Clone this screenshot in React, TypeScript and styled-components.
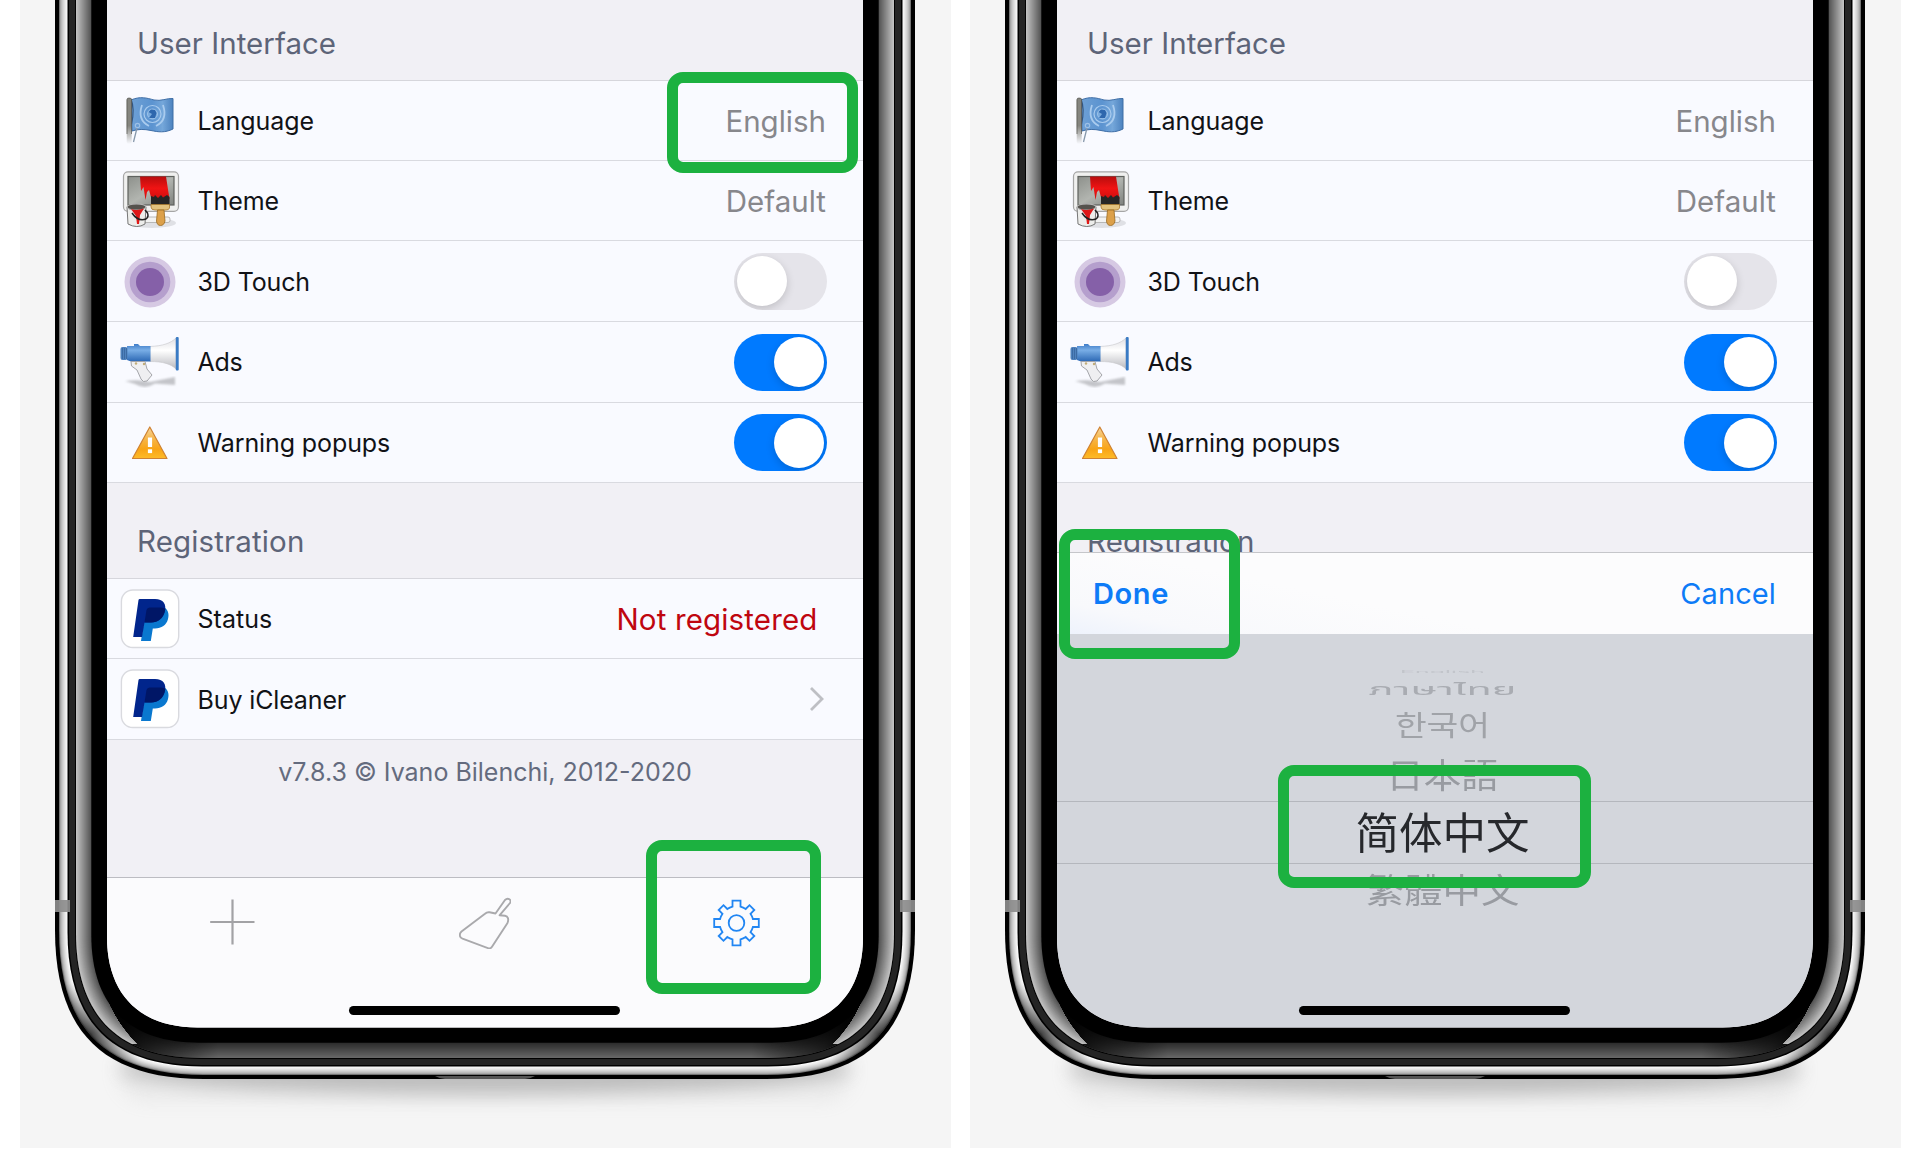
import React from 'react';
import styled, { createGlobalStyle } from 'styled-components';

const GlobalStyle = createGlobalStyle`
  *, *::before, *::after { box-sizing: border-box; }
  html, body { margin: 0; background: #fff; overflow: hidden; }
  body { font-family: Inter, Roboto, "Noto Sans CJK SC", sans-serif; }
`;

const Page = styled.main`
  display: flex;
  gap: 18.5px;
  width: 1920px;
  height: 1168px;
  padding-left: 19.5px;
  background: #fff;
`;

const Panel = styled.section`
  width: 931.5px;
  height: 1148px;
  padding-left: 35.5px;
  background: #f5f5f5;
`;

const Phone = styled.div`
  position: relative;
  width: 860px;
  height: 1148px;
  padding: 0 52px;
`;

const BezelArt = styled.svg`
  position: absolute;
  left: 0;
  top: 0;
  width: 860px;
  height: 1148px;
`;

const Screen = styled.div`
  position: relative;
  display: flex;
  flex-direction: column;
  width: 756px;
  height: 1027.5px;
  background: #f1f0f5;
  clip-path: path('M0 0 H756 V937 C756 994.5 723 1027.5 665.5 1027.5 H90.5 C33 1027.5 0 994.5 0 937 Z');
`;

const SectionTitle = styled.h2<{ $height: number; $spacing: number }>`
  display: flex;
  align-items: flex-end;
  flex: none;
  height: ${(p) => p.$height}px;
  margin: 0;
  padding: 0 0 19px 30px;
  border-bottom: 1.5px solid #d6d6dc;
  font-size: 29.5px;
  line-height: 36px;
  font-weight: 400;
  letter-spacing: ${(p) => p.$spacing}px;
  color: #5d6478;
`;

const Row = styled.div<{ $height: number }>`
  display: flex;
  align-items: center;
  flex: none;
  height: ${(p) => p.$height}px;
  padding: 0 36px 0 14px;
  background: #f9faff;
  border-bottom: 1.5px solid #d9dae0;
`;

const IconSlot = styled.svg`
  flex: none;
  width: 58px;
  height: 58px;
  overflow: visible;
`;

const Label = styled.span<{ $spacing: number }>`
  flex: 1;
  margin-left: 18.5px;
  padding-top: 1.5px;
  font-size: 25px;
  line-height: 32px;
  letter-spacing: ${(p) => p.$spacing}px;
  white-space: nowrap;
  color: #111216;
`;

const Value = styled.span<{ $color?: string; $inset?: number; $spacing: number }>`
  margin-right: ${(p) => p.$inset ?? 1}px;
  padding-top: 1px;
  font-size: 29.5px;
  line-height: 36px;
  letter-spacing: ${(p) => p.$spacing}px;
  white-space: nowrap;
  color: ${(p) => p.$color ?? '#87878c'};
`;

const Switch = styled.span<{ $on: boolean }>`
  display: flex;
  align-items: center;
  justify-content: ${(p) => (p.$on ? 'flex-end' : 'flex-start')};
  width: 93.5px;
  height: 57px;
  margin-top: 1px;
  padding: 0 3.5px;
  border-radius: 29px;
  background: ${(p) => (p.$on ? '#007aff' : '#e5e4ea')};
  overflow: hidden;

  &::after {
    content: '';
    width: 50px;
    height: 50px;
    border-radius: 50%;
    background: #fff;
    box-shadow: 0 3px 8px rgba(0, 0, 0, 0.16);
  }
`;

const Chevron = styled.svg`
  width: 16px;
  height: 26px;
  margin-right: 2px;
`;

const Version = styled.p`
  flex: 1;
  margin: 0;
  padding-top: 16px;
  text-align: center;
  font-size: 25px;
  line-height: 32px;
  color: #646b7e;
`;

const TabBar = styled.nav`
  display: grid;
  grid-template-columns: repeat(3, 1fr);
  justify-items: center;
  flex: none;
  height: 150.5px;
  padding-top: 18.5px;
  border-top: 1.5px solid #bcbcc2;
  background: #fbfbfd;
`;

const TabIcon = styled.svg`
  width: 52px;
  height: 52px;
  fill: none;
`;

const HomeIndicator = styled.div`
  position: absolute;
  left: 242px;
  bottom: 12.5px;
  width: 270.5px;
  height: 9px;
  border-radius: 5px;
  background: #000;
`;

const Sheet = styled.div`
  position: absolute;
  left: 0;
  right: 0;
  bottom: 0;
  display: flex;
  flex-direction: column;
  height: 475.5px;
`;

const SheetBar = styled.div`
  display: flex;
  align-items: center;
  justify-content: space-between;
  height: 82px;
  padding: 0 37px 0 36px;
  border-top: 1.5px solid #c5c6ca;
  background: linear-gradient(12deg, #edf2fc 0, #f8f9fc 14%, #fcfcfd 40%);
`;

const SheetButton = styled.button<{ $bold?: boolean; $spacing: number }>`
  padding: 1px 0 0;
  border: 0;
  background: none;
  font: ${(p) => (p.$bold ? 600 : 400)} 29px/36px Inter, sans-serif;
  letter-spacing: ${(p) => p.$spacing}px;
  color: #0d7bf7;
`;

const Wheel = styled.div`
  display: flex;
  flex-direction: column;
  align-items: center;
  flex: 1;
  padding-top: 36px;
  background: #d3d6dc;
`;

const WheelItem = styled.div<{ $height: number; $size: number; $squash: number; $color: string; $font?: string; $rise?: number }>`
  display: flex;
  align-items: center;
  justify-content: center;
  align-self: stretch;
  flex: none;
  height: ${(p) => p.$height}px;
  padding-left: 15px;
  padding-bottom: ${(p) => p.$rise ?? 0}px;
  font-family: ${(p) => p.$font ?? '"Noto Sans CJK SC"'}, sans-serif;
  font-size: ${(p) => p.$size}px;
  font-weight: 400;
  line-height: 1;
  color: ${(p) => p.$color};

  span { display: block; white-space: nowrap; transform: scaleY(${(p) => p.$squash}); }
`;

const Sliver = styled.div`
  height: 3px;
  padding-left: 15px;
  overflow: hidden;
  font-size: 25px;
  line-height: 3px;
  color: #c2c5cb;

  span { display: block; transform: scaleY(0.12); }
`;

const Selected = styled.div`
  align-self: stretch;
  border-top: 1.5px solid #b4b7bd;
  border-bottom: 1.5px solid #b4b7bd;
`;

const Highlight = styled.div<{ $x: number; $y: number; $w: number; $h: number }>`
  position: absolute;
  left: ${(p) => p.$x}px;
  top: ${(p) => p.$y}px;
  width: ${(p) => p.$w}px;
  height: ${(p) => p.$h}px;
  border: 11px solid #1cb140;
  border-radius: 16px;
`;

/* Outline of the phone body at a given inset, running off the top edge. */
function outline(d: number) {
  const r = 149 - (d * 59) / 52;
  const c = r * (0.32 + (d / 52) * 0.04);
  const b = 1079 - d;
  const l = d;
  const e = 860 - d;
  return `M${l} -10 H${e} V${b - r} C${e} ${b - c} ${e - c} ${b} ${e - r} ${b} H${l + r} C${l + c} ${b} ${l} ${b - c} ${l} ${b - r} Z`;
}

function gray(from: number, to: number, t: number) {
  const v = Math.round(from + (to - from) * t);
  return `rgb(${v},${v},${v})`;
}

const silver = Array.from({ length: 9 }, (_, i) => i / 8);
const ring = Array.from({ length: 16 }, (_, i) => i / 15);

function Bezel({ id }: { id: string }) {
  return (
    <BezelArt viewBox="0 0 860 1148">
      <defs>
        <filter id={`${id}-blur`} x="-10%" y="-100%" width="120%" height="300%">
          <feGaussianBlur stdDeviation="9" />
        </filter>
        <radialGradient id={`${id}-shade`}>
          <stop offset="0" stopColor="#000" stopOpacity="0.62" />
          <stop offset="1" stopColor="#000" stopOpacity="0" />
        </radialGradient>
        <linearGradient id={`${id}-floor`} gradientUnits="userSpaceOnUse" x1="0" x2="860" y1="0" y2="0">
          <stop offset="0.08" stopColor="#000" stopOpacity="0.95" />
          <stop offset="0.19" stopColor="#000" stopOpacity="0" />
          <stop offset="0.81" stopColor="#000" stopOpacity="0" />
          <stop offset="0.92" stopColor="#000" stopOpacity="0.95" />
        </linearGradient>
        <clipPath id={`${id}-body`}><path d={outline(4)} /></clipPath>
        <clipPath id={`${id}-sides`}>
          <path d="M0 -10 H37 V915 C37 966 50 1014 82 1044 H0 Z" />
          <path d="M860 -10 H823 V915 C823 966 810 1014 778 1044 H860 Z" />
        </clipPath>
      </defs>
      <ellipse cx="430" cy="1069" rx="365" ry="25" fill="#777" opacity="0.42" filter={`url(#${id}-blur)`} />
      <rect x="62" y="1040" width="736" height="62" rx="30" fill="#aaa" opacity="0.14" filter={`url(#${id}-blur)`} />
      <path d={outline(0)} fill="#000" />
      {silver.map((t) => (
        <path key={t} d={outline(4 + t * 7.5)} fill={gray(115, 250, Math.sqrt(t))} />
      ))}
      <g clipPath={`url(#${id}-body)`}>
        <circle cx="36" cy="1034" r="55" fill={`url(#${id}-shade)`} />
        <circle cx="824" cy="1034" r="55" fill={`url(#${id}-shade)`} />
      </g>
      <path d={outline(12.5)} fill="#000" />
      <path d={outline(14)} fill="#242424" />
      <path d={outline(20)} fill="#000" />
      {ring.map((t) => (
        <path key={t} d={outline(21 + t * 14.5)} fill={gray(102, 44, t)} />
      ))}
      <path d={outline(21)} fill={`url(#${id}-floor)`} />
      <g clipPath={`url(#${id}-sides)`}>
        {ring.map((t) => (
          <path key={t} d={outline(21 + t * 15)} fill={gray(192, 80, t)} />
        ))}
      </g>
      <path d={outline(36.3)} fill="#000" />
      <path d="M380 1076 H480 Q476 1078.5 470 1079 H390 Q384 1078.5 380 1076 Z" fill="#555" />
      <path d="M0 900 H15 V912 H0 Z M845 900 H860 V912 H845 Z" fill="#8d8d8d" opacity="0.92" />
    </BezelArt>
  );
}

const FlagIcon = () => (
  <IconSlot viewBox="121 91 58 58">
    <defs>
      <linearGradient id="flag" x1="0" x2="1"><stop offset="0" stopColor="#6ea0d5" /><stop offset="0.5" stopColor="#5b93d0" /><stop offset="0.75" stopColor="#75a7da" /><stop offset="1" stopColor="#4c82bf" /></linearGradient>
      <linearGradient id="pole" x1="0" x2="0" y1="0" y2="1"><stop offset="0.6" stopColor="#85857f" /><stop offset="1" stopColor="#85857f" stopOpacity="0" /></linearGradient>
    </defs>
    <path d="M131 100 C140 96 147 98 154 100 C161 101.500 167 98 173 98.500 V129 C165 133 158 132 151 130.500 C144 129 138 129 132 131 Z" fill="url(#flag)" stroke="#3f6ea6" strokeWidth="1" />
    <path d="M131 99 Q135 109 131.500 124" fill="none" stroke="#33557f" strokeWidth="1.200" />
    <circle cx="152.500" cy="114" r="8.500" fill="none" stroke="#a9cbee" strokeWidth="1.200" />
    <circle cx="152.500" cy="114" r="5" fill="#78a9dc" stroke="#a9cbee" strokeWidth="0.800" />
    <path d="M148.500 112 L151 109.500 L155 110 L156.500 113 L155 118 L149 118 L152 114 Z" fill="#2e67ad" />
    <path d="M142 105 Q137 120 149 126 M163 105 Q168 120 156 126" fill="none" stroke="#a9cbee" strokeWidth="1.800" />
    <rect x="126.700" y="98" width="5" height="46" rx="2" fill="url(#pole)" />
    <path d="M127 134 V99.500 Q127 98 129 98 Q131.500 98 131.500 99.500 V134" fill="none" stroke="#55554f" strokeWidth="0.700" />
    <circle cx="137.500" cy="125.500" r="2.200" fill="none" stroke="#9dc0e6" strokeWidth="1.200" />
    <path d="M137 128 L133.500 142" stroke="#8798ab" strokeWidth="1.300" />
  </IconSlot>
);

const ThemeIcon = () => (
  <IconSlot viewBox="121 171 58 58">
    <defs>
      <linearGradient id="crt" x1="0" x2="1" y1="0" y2="1"><stop offset="0" stopColor="#8d908b" /><stop offset="0.5" stopColor="#b2b5b0" /><stop offset="1" stopColor="#7f827e" /></linearGradient>
      <linearGradient id="paint" x1="0" x2="0" y1="0" y2="1"><stop offset="0" stopColor="#b80d0d" /><stop offset="0.5" stopColor="#f01414" /><stop offset="1" stopColor="#cf0e0e" /></linearGradient>
    </defs>
    <ellipse cx="152" cy="223" rx="24" ry="5" fill="#000" opacity="0.1" />
    <rect x="143" y="217" width="27" height="5.500" rx="2" fill="#f2f2f2" stroke="#aaa" strokeWidth="0.800" />
    <rect x="123.500" y="171.800" width="55" height="39.500" rx="4.500" fill="#f0f0ef" stroke="#a6a6a6" strokeWidth="1.200" />
    <rect x="128" y="176.500" width="46" height="28.500" fill="url(#crt)" stroke="#5f625e" strokeWidth="1.200" />
    <path d="M140 176.500 H166 L169.500 199 H151.500 L149 190 L147 192 L145.500 200 L143.500 187 L141 191 Z" fill="url(#paint)" />
    <path d="M151 205 V196 L154 197 L155 195 L158 198 L161 195 L163 197.500 L167 195 L169.500 197 V205 Z" fill="#262626" />
    <path d="M151 204.500 H169.500 V208 Q169 210 166 210 H155 Q151 210 151 207 Z" fill="#e2c27e" stroke="#a97a2e" strokeWidth="0.800" />
    <path d="M157.500 210 H164 L165 221 Q164 225.500 160.500 225.500 Q157 225.500 156.500 221 Z" fill="#dca04a" stroke="#9b6a20" strokeWidth="0.800" />
    <path d="M127 207 H146 L145 224 Q137 229 128 224 Z" fill="#ededeb" stroke="#777" strokeWidth="1" />
    <ellipse cx="136.500" cy="207" rx="9.500" ry="3.200" fill="#55524d" stroke="#b4b4b4" strokeWidth="1.200" />
    <path d="M131 209 Q137 211 144 208.500 L140 215 L139 224 H137 L136 216 Z" fill="#df1717" />
    <path d="M132 213 Q138 222 146 219 Q149 217 147.500 213 L145 210" fill="none" stroke="#222" strokeWidth="1.500" />
  </IconSlot>
);

const TouchIcon = () => (
  <IconSlot viewBox="0 0 58 58">
    <circle cx="29" cy="30" r="25.500" fill="#d6c9e3" />
    <circle cx="29" cy="30" r="20.300" fill="#b59fcd" />
    <circle cx="29" cy="30" r="14" fill="#8560a8" />
  </IconSlot>
);

const MegaphoneIcon = () => (
  <IconSlot viewBox="121 332 58 58">
    <defs>
      <linearGradient id="horn" x1="0" x2="0" y1="0" y2="1"><stop offset="0" stopColor="#dfdfe3" /><stop offset="0.4" stopColor="#fff" /><stop offset="1" stopColor="#b9babf" /></linearGradient>
      <linearGradient id="barrel" x1="0" x2="0" y1="0" y2="1"><stop offset="0" stopColor="#3e7cc8" /><stop offset="0.35" stopColor="#79aee6" /><stop offset="1" stopColor="#2c68b4" /></linearGradient>
      <filter id="soft"><feGaussianBlur stdDeviation="0.8" /></filter>
    </defs>
    <path d="M125 380 Q140 378 150 381 L175 376 V384 L155 382.500 Q145 389 135 383 Z" fill="#8f9094" opacity="0.5" filter="url(#soft)" />
    <path d="M150 345.500 C163 345 171 342 176 337 V368 C171 363 163 360.500 150 360.500 Z" fill="url(#horn)" stroke="#c6c6ca" strokeWidth="0.600" />
    <rect x="175.800" y="336" width="2.900" height="33.500" rx="1" fill="#3a7bc4" />
    <path d="M127 345 L134 345 V343 H138 L140 345 H150.500 V360.500 H131 L127 359 Z" fill="url(#barrel)" />
    <rect x="120.500" y="346" width="7" height="13" rx="2" fill="#4f82bd" />
    <path d="M122.500 347 V358 M124.500 347 V358 M126.500 347 V358" stroke="#34629a" strokeWidth="0.700" />
    <path d="M131 360.500 H145 L147 368 L152 374 L147 380 Q143 382 141 378 L137 369 L131.500 365 Z" fill="#efeff1" stroke="#a4a5aa" strokeWidth="1" />
    <circle cx="136" cy="362.500" r="1.200" fill="#c2ad77" /><circle cx="144" cy="363" r="1.200" fill="#c2ad77" />
  </IconSlot>
);

const WarningIcon = () => (
  <IconSlot viewBox="121 413 58 58">
    <defs>
      <linearGradient id="warn" x1="0" x2="0" y1="0" y2="1"><stop offset="0" stopColor="#f6d49a" /><stop offset="0.45" stopColor="#f7b13c" /><stop offset="0.7" stopColor="#f9a416" /><stop offset="1" stopColor="#fdbb2a" /></linearGradient>
    </defs>
    <path d="M149.800 427 L167 458.500 H132.500 Z" fill="url(#warn)" stroke="#cf8232" strokeWidth="1.200" strokeLinejoin="round" />
    <path d="M150 437.500 V447" stroke="#fff" strokeWidth="4.200" />
    <rect x="147.900" y="449.300" width="4.200" height="3.800" fill="#fff" />
  </IconSlot>
);

const PayPalIcon = () => (
  <IconSlot viewBox="121 589 58 58">
    <rect x="121.400" y="589" width="57.300" height="57.500" rx="11.500" fill="#fff" stroke="#d9dadf" strokeWidth="1.400" />
    <path d="M146 606 H163 C168 607.500 169.500 613 168 618 C166.500 624 161.500 627.500 155 627.500 H152.800 L150.800 640 H141 Z" fill="#0a78cf" />
    <path d="M139.800 598 H155 C163.500 598 166.500 603.500 165 610 C163.300 617.500 158 621.500 151 621.500 H144.500 L142 636 H133.200 L138.500 599 Q138.700 598 139.800 598 Z" fill="#01258c" />
    <path d="M146.500 609 Q147.200 606.500 149.500 606.500 H161 Q164 606.500 165.300 608 C163.800 617.500 158 621.500 151 621.500 H144.500 Z" fill="#001666" />
  </IconSlot>
);

/* Eight square teeth around a r=16.5 body. */
function gearPath() {
  const steps: string[] = [];
  for (let i = 0; i < 8; i += 1) {
    const a = (i * Math.PI) / 4;
    const half = i % 2 === 0 ? 4 : 3.4;
    const outer = i % 2 === 0 ? 22.3 : 21.8;
    const at = (u: number, v: number) =>
      `${(26 + Math.cos(a) * u - Math.sin(a) * v).toFixed(2)} ${(26 + Math.sin(a) * u + Math.cos(a) * v).toFixed(2)}`;
    steps.push(`${i === 0 ? 'M' : 'A17 17 0 0 1 '}${at(16.4, -half)} L${at(outer, -half)} L${at(outer, half)} L${at(16.4, half)}`);
  }
  return `${steps.join(' ')} A17 17 0 0 1 42.4 22 Z`;
}

const rows = [
  { label: 'Language', icon: <FlagIcon />, height: 80, spacing: -0.05, value: 'English', valueSpacing: 0 },
  { label: 'Theme', icon: <ThemeIcon />, height: 80.5, spacing: -0.1, value: 'Default', valueSpacing: 0 },
  { label: '3D Touch', icon: <TouchIcon />, height: 80.5, spacing: -0.13, on: false },
  { label: 'Ads', icon: <MegaphoneIcon />, height: 81, spacing: -0.3, on: true },
  { label: 'Warning popups', icon: <WarningIcon />, height: 80.5, spacing: -0.1, on: true },
];

function InterfaceSection() {
  return (
    <>
      <SectionTitle $height={80.5} $spacing={0.03}>User Interface</SectionTitle>
      {rows.map((r) => (
        <Row key={r.label} $height={r.height}>
          {r.icon}
          <Label $spacing={r.spacing}>{r.label}</Label>
          {r.value ? <Value $spacing={r.valueSpacing ?? 0}>{r.value}</Value> : <Switch $on={!!r.on} />}
        </Row>
      ))}
      <SectionTitle $height={96} $spacing={0.14}>Registration</SectionTitle>
    </>
  );
}

function RegistrationRows() {
  return (
    <>
      <Row $height={80}>
        <PayPalIcon />
        <Label $spacing={0.05}>Status</Label>
        <Value $color="#bf060f" $inset={9.5} $spacing={0.15}>Not registered</Value>
      </Row>
      <Row $height={80.5}>
        <PayPalIcon />
        <Label $spacing={-0.13}>Buy iCleaner</Label>
        <Chevron viewBox="0 0 16 26"><path d="M2 2 L13 13 L2 24" fill="none" stroke="#bebfc4" strokeWidth="2.800" /></Chevron>
      </Row>
      <Version>v7.8.3 © Ivano Bilenchi, 2012-2020</Version>
    </>
  );
}

function Tabs() {
  return (
    <TabBar>
      <TabIcon viewBox="0 0 52 52"><path d="M25.500 2.500 V47.500 M3.200 25 H47.500" stroke="#a2a2a5" strokeWidth="2.200" /></TabIcon>
      <TabIcon viewBox="459 896 52 52">
        <path d="M499.500 914.300 L510 902 C512 899 508 896 505 899 L495.500 912.500 L489.500 911.300 C487.500 911 486 911.800 485 912.700 L461.500 930.500 C458.800 933 459.500 936.500 462.500 937.700 L488.500 947.300 Q490.500 948 492 945.700 L507.500 922 C509 918 508 915.300 505 914.800 Z" stroke="#a9a9ac" strokeWidth="1.900" strokeLinejoin="round" />
      </TabIcon>
      <TabIcon viewBox="0.5 0 52 52">
        <path d={gearPath()} stroke="#2186f3" strokeWidth="1.800" />
        <circle cx="26" cy="26" r="7.800" stroke="#2186f3" strokeWidth="1.800" />
      </TabIcon>
    </TabBar>
  );
}

function LanguageSheet() {
  return (
    <Sheet>
      <SheetBar>
        <SheetButton $bold $spacing={0.6}>Done</SheetButton>
        <SheetButton $spacing={0.1}>Cancel</SheetButton>
      </SheetBar>
      <Wheel>
        <Sliver><span>English</span></Sliver>
        <WheelItem $height={31} $size={41.5} $squash={0.38} $color="#a9acb2" $font='"Noto Sans", "Noto Sans Thai"'><span>ภาษาไทย</span></WheelItem>
        <WheelItem $height={40} $size={34.5} $squash={0.84} $color="#a0a3a8" $font='"Noto Sans CJK KR"' $rise={1.5}><span>한국어</span></WheelItem>
        <WheelItem $height={56.5} $size={37.5} $squash={0.92} $color="#989ba1" $font='"Noto Sans CJK JP"'><span>日本語</span></WheelItem>
        <Selected>
          <WheelItem $height={61} $size={43.5} $squash={0.98} $color="#26282c" $rise={2}><span>简体中文</span></WheelItem>
        </Selected>
        <WheelItem $height={53} $size={38.5} $squash={0.9} $color="#989ba1" $font='"Noto Sans CJK TC"' $rise={4}><span>繁體中文</span></WheelItem>
      </Wheel>
    </Sheet>
  );
}

export default function App() {
  return (
    <>
      <GlobalStyle />
      <Page>
        <Panel>
          <Phone>
            <Bezel id="left" />
            <Screen>
              <InterfaceSection />
              <RegistrationRows />
              <Tabs />
              <HomeIndicator />
              <Highlight $x={560} $y={71.5} $w={190.5} $h={101.5} />
              <Highlight $x={538.5} $y={840} $w={175.5} $h={153.5} />
            </Screen>
          </Phone>
        </Panel>
        <Panel>
          <Phone>
            <Bezel id="right" />
            <Screen>
              <InterfaceSection />
              <LanguageSheet />
              <HomeIndicator />
              <Highlight $x={2} $y={528.5} $w={180.5} $h={130.5} />
              <Highlight $x={220.5} $y={764.5} $w={313.5} $h={123.5} />
            </Screen>
          </Phone>
        </Panel>
      </Page>
    </>
  );
}
